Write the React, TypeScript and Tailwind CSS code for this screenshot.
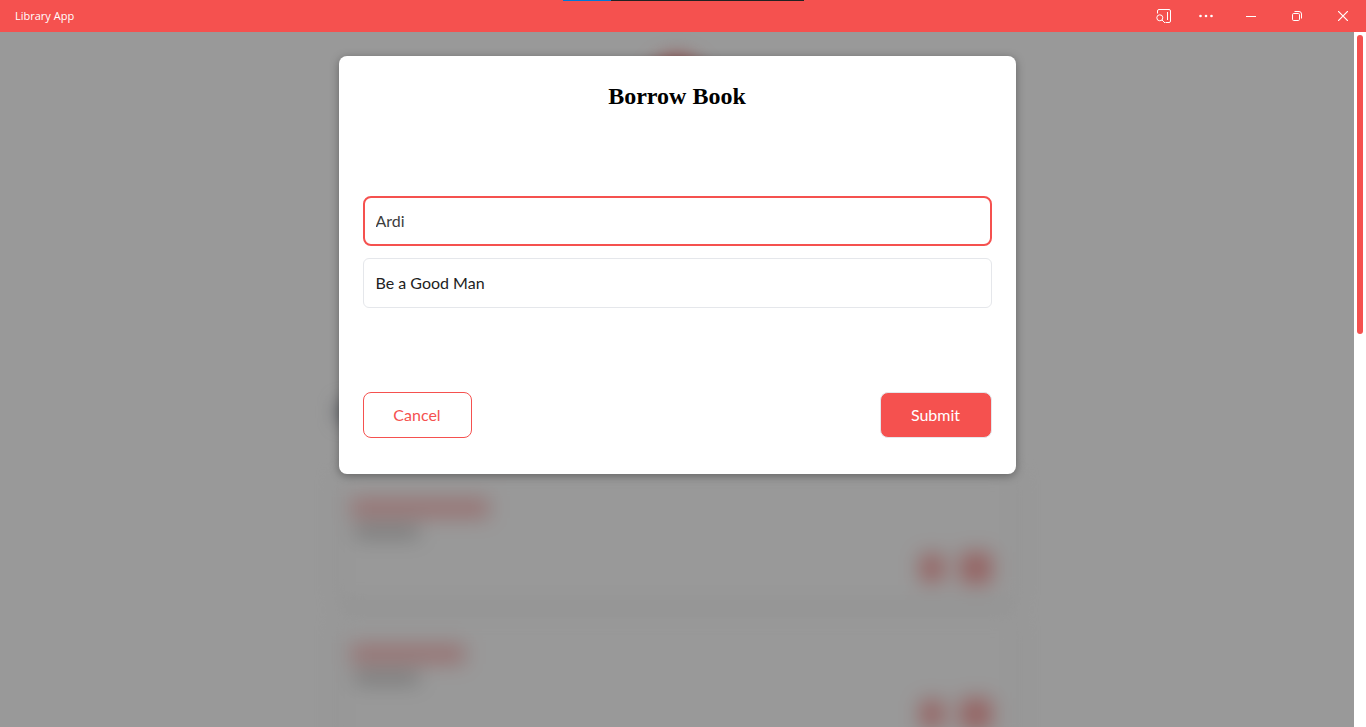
import React from "react";

const books = [
  { id: 1, titleWidth: "w-[138px]" },
  { id: 2, titleWidth: "w-[114px]" },
];

function TitleBar() {
  return (
    <header className="relative flex h-8 shrink-0 items-center justify-between bg-[#f5514f] text-white">
      <h1 className="pl-[15px] font-['Open_Sans',sans-serif] text-[11px] leading-4">Library App</h1>
      <div className="absolute left-1/2 top-0 flex h-px w-[241px] -translate-x-[120px] bg-[#222]">
        <div className="h-px w-12 bg-[#0078d7]" />
      </div>
      <div className="flex h-full items-center">
        <button type="button" aria-label="Search page" className="flex h-full w-10 items-center justify-center">
          <svg width="16" height="16" viewBox="0 0 16 16" fill="none" stroke="currentColor">
            <path d="M1.5 5.5V3A1.5 1.5 0 0 1 3 1.5h10A1.5 1.5 0 0 1 14.5 3v10a1.5 1.5 0 0 1-1.5 1.5H9.5" />
            <path d="M11.5 4v8" />
            <circle cx="3.8" cy="9.8" r="3" />
            <path d="M6 12l3 3" />
          </svg>
        </button>
        <button type="button" aria-label="More options" className="flex h-full w-11 items-center justify-center">
          <svg width="16" height="16" viewBox="0 0 16 16" fill="currentColor">
            <circle cx="2.5" cy="8" r="1.3" />
            <circle cx="8" cy="8" r="1.3" />
            <circle cx="13.5" cy="8" r="1.3" />
          </svg>
        </button>
        <button type="button" aria-label="Minimize" className="flex h-full w-[46px] items-center justify-center">
          <svg width="10" height="10" viewBox="0 0 10 10" fill="none" stroke="currentColor">
            <path d="M0 5.5h10" />
          </svg>
        </button>
        <button type="button" aria-label="Restore" className="flex h-full w-[46px] items-center justify-center">
          <svg width="10" height="10" viewBox="0 0 10 10" fill="none" stroke="currentColor">
            <rect x="0.5" y="2.5" width="7" height="7" rx="1.2" />
            <path d="M2.5 .5H7a2.5 2.5 0 0 1 2.5 2.5v4.5" />
          </svg>
        </button>
        <button type="button" aria-label="Close" className="flex h-full w-[46px] items-center justify-center">
          <svg width="10" height="10" viewBox="0 0 10 10" fill="none" stroke="currentColor" strokeWidth="1.2">
            <path d="M0 0l10 10M10 0L0 10" />
          </svg>
        </button>
      </div>
    </header>
  );
}

function Library() {
  return (
    <div aria-hidden="true" className="mx-auto flex w-1/2 flex-col pt-6 blur-[10px]">
      <div className="mx-auto h-14 w-14 rounded-full bg-[#f5514f]/80" />
      <div className="mt-[292px] h-4 w-24 bg-gray-500" />
      <div className="mt-[52px] flex flex-col gap-4">
        {books.map((book) => (
          <div
            key={book.id}
            className="flex h-[130px] flex-col rounded-lg bg-white px-3 pt-[26px] shadow-[0_2px_8px_rgba(0,0,0,0.15)]"
          >
            <div className={`h-5 bg-[#f5514f]/35 ${book.titleWidth}`} />
            <div className="mt-2 ml-1 h-3 w-16 bg-neutral-500/40" />
            <div className="mt-[14px] flex items-center justify-end gap-4 pr-3">
              <div className="h-7 w-6 rounded-sm bg-[#f5514f]/50" />
              <div className="h-8 w-8 rounded-sm bg-[#f5514f]/50" />
            </div>
          </div>
        ))}
      </div>
    </div>
  );
}

function BorrowDialog() {
  return (
    <div className="absolute inset-0 bg-black/40 pt-6">
      <form
        role="dialog"
        aria-labelledby="dialog-title"
        onSubmit={(event) => event.preventDefault()}
        className="mx-auto w-1/2 rounded-lg bg-white px-6 pt-6 pb-9 shadow-[0_2px_10px_rgba(0,0,0,0.35)]"
      >
        <h2
          id="dialog-title"
          className="text-center font-['Liberation_Serif',serif] text-2xl font-bold text-black"
        >
          Borrow Book
        </h2>
        <div className="my-[84px] flex flex-col gap-3">
          <input
            aria-label="Borrower"
            defaultValue="Ardi"
            className="h-[50px] w-full rounded-lg border-2 border-[#f5514f] px-[11px] pb-0.5 text-[#3d3d3d] outline-none"
          />
          <input
            aria-label="Book"
            defaultValue="Be a Good Man"
            className="h-[50px] w-full rounded-md border border-gray-200 px-3 pb-0.5 text-[#222] outline-none"
          />
        </div>
        <div className="flex justify-between">
          <button
            type="button"
            className="h-[46px] w-[109px] rounded-lg border border-[#f5514f] text-[#f5514f]"
          >
            Cancel
          </button>
          <button
            type="submit"
            className="h-[46px] w-[112px] rounded-lg border border-gray-200 bg-[#f5514f] text-white"
          >
            Submit
          </button>
        </div>
      </form>
    </div>
  );
}

export default function App() {
  return (
    <div className="flex h-screen flex-col overflow-hidden bg-white font-['Lato',sans-serif] text-base">
      <TitleBar />
      <div className="flex min-h-0 flex-1">
        <main className="relative min-w-0 flex-1 overflow-hidden">
          <Library />
          <BorrowDialog />
        </main>
        <div className="w-3 shrink-0 bg-white p-[3px]">
          <div className="h-[43.4%] w-full rounded-full bg-[#f5514f]" />
        </div>
      </div>
    </div>
  );
}
